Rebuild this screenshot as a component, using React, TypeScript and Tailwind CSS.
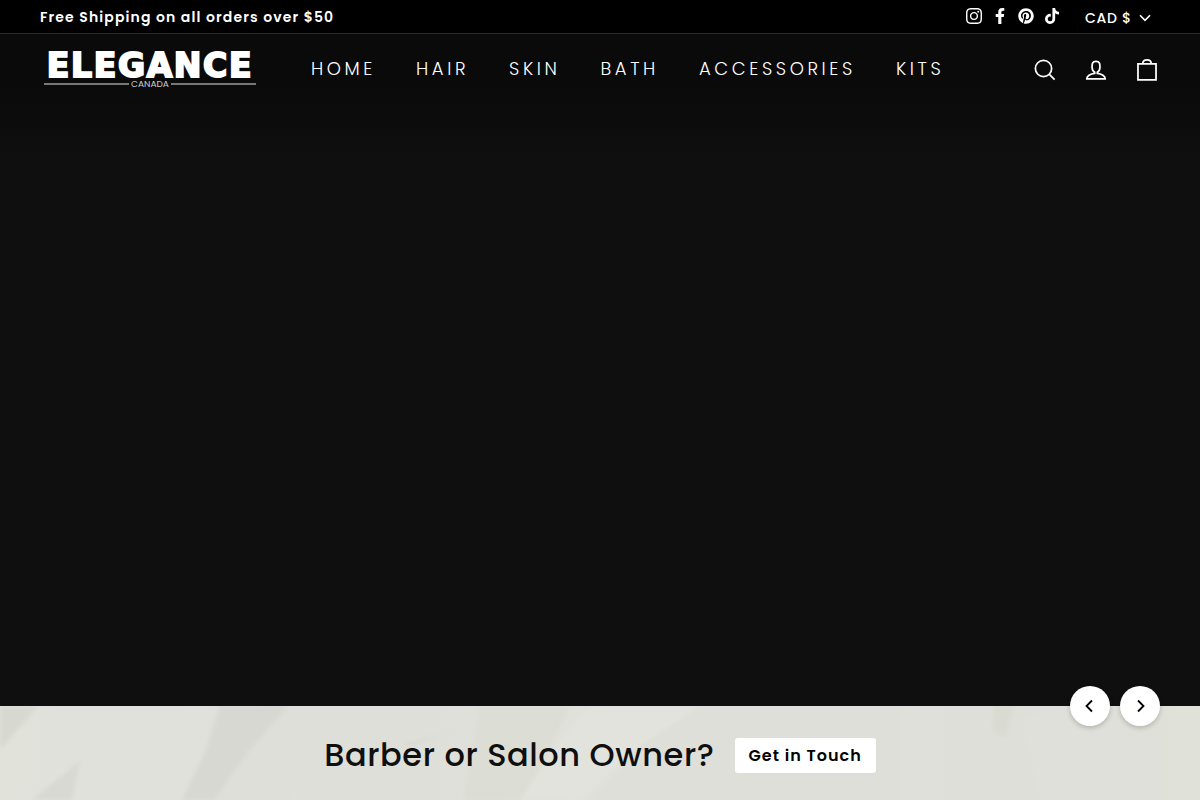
import { useState } from 'react'
import { FaFacebookF, FaPinterest, FaTiktok } from 'react-icons/fa'
import { SiInstagram } from 'react-icons/si'

const navLinks = ['Home', 'Hair', 'Skin', 'Bath', 'Accessories', 'Kits']

const socials = [
  { name: 'Instagram', Icon: SiInstagram },
  { name: 'Facebook', Icon: FaFacebookF },
  { name: 'Pinterest', Icon: FaPinterest },
  { name: 'TikTok', Icon: FaTiktok },
]

function AnnouncementBar() {
  const [currency, setCurrency] = useState('CAD')

  return (
    <div className="flex h-[34px] items-center justify-between border-b border-[#2b2b2b] bg-black px-10">
      <p className="text-sm font-semibold tracking-[0.08em]">Free Shipping on all orders over $50</p>
      <div className="flex items-center gap-[25px]">
        <ul className="flex items-center gap-2.5 pb-0.5">
          {socials.map(({ name, Icon }) => (
            <li key={name}>
              <a href="#" aria-label={name} className="block">
                <Icon className="size-4" />
              </a>
            </li>
          ))}
        </ul>
        <div className="relative mr-[9px] pt-0.5">
          <select
            aria-label="Currency"
            value={currency}
            onChange={(e) => setCurrency(e.target.value)}
            className="block appearance-none bg-transparent pr-[19px] text-sm font-medium tracking-wider"
          >
            <option value="CAD">CAD $</option>
            <option value="USD">USD $</option>
          </select>
          <svg
            viewBox="0 0 12 8"
            className="pointer-events-none absolute top-2 right-0 h-2 w-3"
            fill="none"
            stroke="currentColor"
            strokeWidth="1.6"
          >
            <path d="M1 1.2 6 6.4l5-5.2" />
          </svg>
        </div>
      </div>
    </div>
  )
}

function Logo() {
  return (
    <a href="#" className="flex w-[212px] flex-col pt-0.5">
      <span className="text-center font-['DejaVu_Sans',sans-serif] text-[33px] leading-7 font-bold tracking-wider whitespace-nowrap [-webkit-text-stroke:2px_white]">
        ELEGANCE
      </span>
      <span className="flex items-center gap-0.5">
        <span className="h-0.5 flex-1 bg-[#777]" />
        <span className="text-[9px] leading-2 text-[#ccc]">CANADA</span>
        <span className="h-0.5 flex-1 bg-[#777]" />
      </span>
    </a>
  )
}

function Header() {
  return (
    <header className="flex h-[70px] items-center pr-[39px] pl-11">
      <Logo />
      <nav className="ml-[55px] flex flex-1 gap-10">
        {navLinks.map((label) => (
          <a key={label} href="#" className="text-lg font-light tracking-[0.2em] uppercase">
            {label}
          </a>
        ))}
      </nav>
      <div className="flex gap-[23px] pt-0.5">
        <button aria-label="Search">
          <svg viewBox="0 0 64 64" className="size-7" fill="none" stroke="currentColor" strokeWidth="4">
            <path d="M47.16 28.58A18.58 18.58 0 1 1 28.58 10a18.58 18.58 0 0 1 18.58 18.58ZM54 54 41.94 42" />
          </svg>
        </button>
        <button aria-label="Account">
          <svg viewBox="0 0 64 64" className="size-7" fill="none" stroke="currentColor" strokeWidth="4">
            <path d="M35 39.84v-2.53c3.3-1.91 6-6.66 6-11.42 0-7.63 0-13.82-9-13.82s-9 6.19-9 13.82c0 4.76 2.7 9.51 6 11.42v2.53c-10.18.85-18 6-18 12.16h42c0-6.19-7.82-11.31-18-12.16Z" />
          </svg>
        </button>
        <button aria-label="Cart">
          <svg viewBox="0 0 64 64" className="size-7" fill="none" stroke="currentColor" strokeWidth="4">
            <path d="M11.375 17.863h41.25v36.75h-41.25z" />
            <path d="M22.25 18c0-7.105 4.35-9 9.75-9s9.75 1.895 9.75 9" />
          </svg>
        </button>
      </div>
    </header>
  )
}

function SlideButton({ label, path }: { label: string; path: string }) {
  return (
    <button
      aria-label={label}
      className="flex size-10 items-center justify-center rounded-full bg-white text-black shadow-[0_2px_5px_rgba(0,0,0,0.2)]"
    >
      <svg viewBox="0 0 12 14" className="h-3.5 w-3" fill="none" stroke="currentColor" strokeWidth="1.8">
        <path d={path} />
      </svg>
    </button>
  )
}

function Hero() {
  return (
    <section className="relative h-[84vh] bg-[#0f0f0f]">
      <div className="h-32 bg-linear-to-b from-[#0a0a0a] from-40% to-[#0f0f0f]">
        <Header />
      </div>
      <div className="absolute right-10 -bottom-5 z-10 flex gap-2.5">
        <SlideButton label="Previous slide" path="M8 1.5 2.5 7 8 12.5" />
        <SlideButton label="Next slide" path="M4 1.5 9.5 7 4 12.5" />
      </div>
    </section>
  )
}

// Crumpled paper folds behind the banner
function PaperTexture() {
  return (
    <svg
      aria-hidden="true"
      viewBox="0 0 1200 94"
      preserveAspectRatio="none"
      className="absolute inset-0 h-full w-full"
    >
      <defs>
        <linearGradient id="paper">
          <stop offset="0" stopColor="#e1e2da" />
          <stop offset="0.15" stopColor="#dfe1da" />
          <stop offset="0.3" stopColor="#dedfd8" />
          <stop offset="0.5" stopColor="#e1e1db" />
          <stop offset="0.62" stopColor="#dedfd7" />
          <stop offset="0.75" stopColor="#dfe0d9" />
          <stop offset="0.88" stopColor="#dddfd8" />
          <stop offset="1" stopColor="#e0e1d8" />
        </linearGradient>
        <filter id="soft" x="-10%" y="-10%" width="120%" height="120%">
          <feGaussianBlur stdDeviation="2" />
        </filter>
      </defs>
      <rect width="1200" height="94" fill="url(#paper)" />
      <g filter="url(#soft)">
        <path d="M0 0h38L0 44Z" fill="#d7d9d1" />
        <path d="M32 94 80 55l-8 39Z" fill="#d7d9d2" />
        <path d="M220 0h68L248 46l-34 48h-32l24-50Z" fill="#d7d8d1" />
        <path d="M288 0h72l-50 60-22 34h-74l34-48Z" fill="#dedfd8" />
        <path d="M400 40 450 26l-40 14Z" fill="#d5d6d0" />
        <path d="M480 0h90l-46 94h-60Z" fill="#dcddd5" />
        <path d="M590 0h110l-60 40-60 54h-60l40-60Z" fill="#e3e3dd" />
        <path d="M700 0h200v94H590l50-54Z" fill="#dedfd8" />
        <path d="M995 0h18l-8 32-12-8Z" fill="#d9dbd1" />
        <path d="M1020 10 1070 4l90 20v70h-120Z" fill="#dfe0d9" />
      </g>
    </svg>
  )
}

function ContactBanner() {
  return (
    <section className="relative flex-1 bg-[#dfe0d9] text-[#0f0f0f]">
      <PaperTexture />
      <div className="relative flex items-center justify-center gap-5 px-10 pt-8 pb-4">
        <h2 className="pb-0.5 text-[32px] leading-8 font-medium tracking-[0.018em]">Barber or Salon Owner?</h2>
        <a href="#" className="rounded-[3px] bg-white px-3.5 text-base leading-[35px] font-semibold tracking-[1px] text-black">
          Get in Touch
        </a>
      </div>
    </section>
  )
}

export default function App() {
  return (
    <div className="flex min-h-screen flex-col bg-[#0f0f0f] font-['Poppins','Inter',sans-serif] text-white">
      <AnnouncementBar />
      <Hero />
      <ContactBanner />
    </div>
  )
}
